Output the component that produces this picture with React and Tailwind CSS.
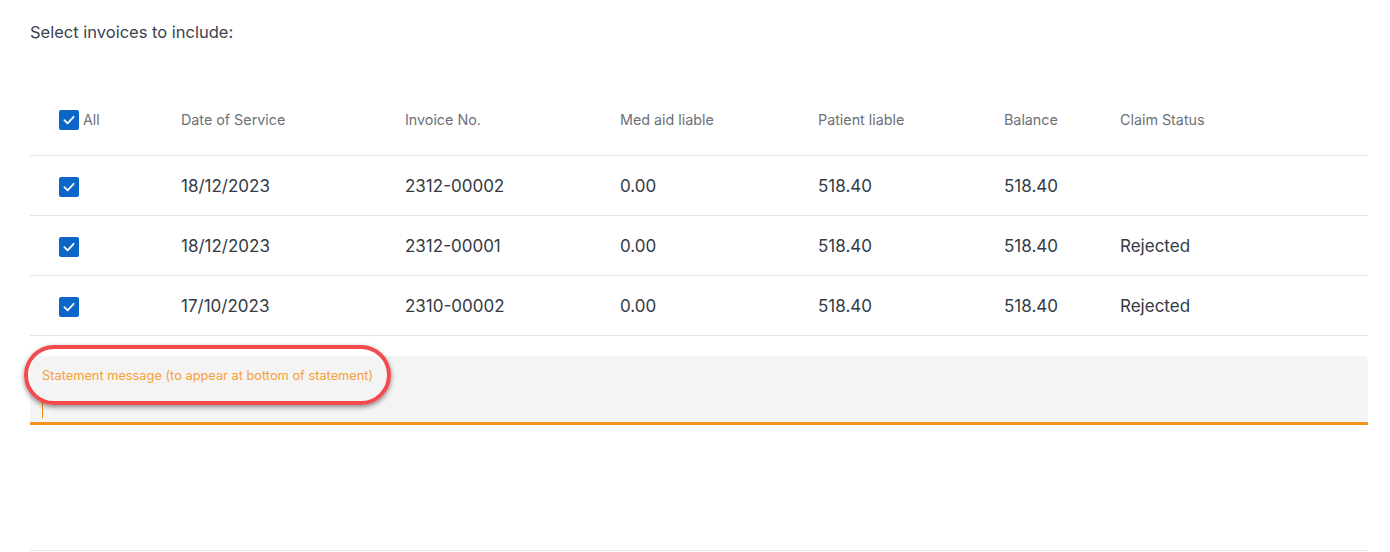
import React from "react";

function Check() {
  return (
    <span className="inline-flex h-5 w-5 items-center justify-center rounded-[2px] bg-[#0b66c7]">
      <svg width="14" height="14" viewBox="0 0 14 14" fill="none">
        <path d="M2.4 7.2 L5.6 10.3 L11.6 3.8" stroke="#fff" strokeWidth="1.8" strokeLinecap="round" strokeLinejoin="round" />
      </svg>
    </span>
  );
}

const rows = [
  ["18/12/2023", "2312-00002", "0.00", "518.40", "518.40", ""],
  ["18/12/2023", "2312-00001", "0.00", "518.40", "518.40", "Rejected"],
  ["17/10/2023", "2310-00002", "0.00", "518.40", "518.40", "Rejected"],
];

const grid = "grid grid-cols-[151px_224px_215px_198px_186px_116px_1fr] items-center";

export default function App() {
  return (
    <div className="min-h-[552px] w-[1390px] bg-white pl-[30px] pr-[22px] pt-5" style={{ fontFamily: "Inter, 'Noto Sans', sans-serif" }}>
      <div className="text-[16.5px] leading-6 text-[#3b4250]">Select invoices to include:</div>
      <div className="mt-[41px]">
        <div className={`${grid} h-[71px] border-b border-[#e3e5eb] text-[14.3px] text-[#6b7078]`}>
          <div className="flex items-center pl-[29px]">
            <Check />
            <span className="ml-[4px] -mt-[1px]">All</span>
          </div>
          <div>Date of Service</div>
          <div>Invoice No.</div>
          <div>Med aid liable</div>
          <div>Patient liable</div>
          <div>Balance</div>
          <div>Claim Status</div>
        </div>
        {rows.map((r, i) => (
          <div key={i} className={`${grid} h-[60px] border-b border-[#e3e5eb] text-[17px] text-[#343a46]`}>
            <div className="flex items-center pl-[29px] pt-[2px]">
              <Check />
            </div>
            {r.map((c, j) => (
              <div key={j} className="pt-[2px]">{c}</div>
            ))}
          </div>
        ))}
      </div>
      <div className="relative mt-[20px]">
        <div className="h-[69px] rounded-t-[5px] border-b-[3px] border-[#f7931e] bg-[#f4f4f4] pl-3 pt-[12px]">
          <div className="text-[12.8px] leading-4 text-[#f5a038]">Statement message (to appear at bottom of statement)</div>
          <div className="ml-[0px] mt-[14px] h-[20px] w-px bg-[#e8890c]"></div>
        </div>
        <div className="pointer-events-none absolute left-[-6px] top-[-11px] h-[60px] w-[367px] rounded-full border-4 border-[#f24a4d] shadow-[0_2px_5px_rgba(0,0,0,0.45)]"></div>
      </div>
      <div className="mt-[125px] h-px bg-[#e3e7ee]"></div>
    </div>
  );
}
